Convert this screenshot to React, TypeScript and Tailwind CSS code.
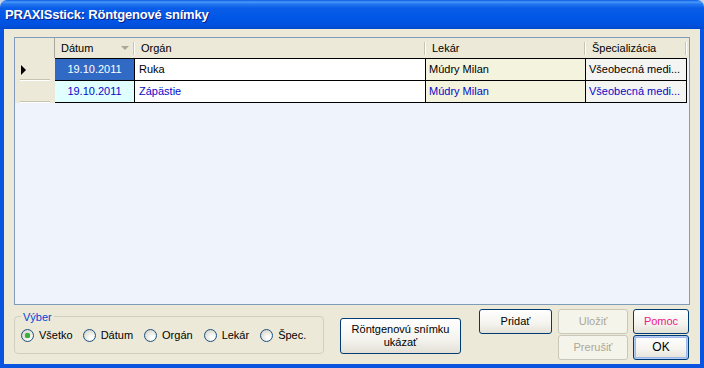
import React from 'react';

interface Column {
    label: string;
    width: number;
    sorted?: boolean;
}

interface Row {
    date: string;
    organ: string;
    doctor: string;
    spec: string;
    current?: boolean;
}

const columns: Column[] = [
    { label: 'Dátum', width: 80, sorted: true },
    { label: 'Orgán', width: 291 },
    { label: 'Lekár', width: 160 },
    { label: 'Špecializácia', width: 101 },
];

const rows: Row[] = [
    { date: '19.10.2011', organ: 'Ruka', doctor: 'Múdry Milan', spec: 'Všeobecná medi...', current: true },
    { date: '19.10.2011', organ: 'Zápästie', doctor: 'Múdry Milan', spec: 'Všeobecná medi...' },
];

const filters = ['Všetko', 'Dátum', 'Orgán', 'Lekár', 'Špec.'];

// XP style push button
const XpButton: React.FC<{
    children: React.ReactNode;
    className?: string;
    disabled?: boolean;
    isDefault?: boolean;
    textClass?: string;
}> = ({ children, className = '', disabled, isDefault, textClass = 'text-black' }) => (
    <div
        className={`flex items-center justify-center rounded-[3px] border text-center leading-[13px] ${
            disabled
                ? 'border-[#C9C7BA] bg-[#F5F4EA] text-[#ACA899]'
                : `border-[#003C74] bg-[linear-gradient(to_bottom,#FFFFFF,#F4F3EE_60%,#E3E1D6)] ${textClass}`
        } ${isDefault ? 'shadow-[inset_0_0_0_1px_#B4CCF4,inset_0_0_0_2px_#9EB8EA]' : ''} ${className}`}
    >
        {children}
    </div>
);

const Radio: React.FC<{ label: string; checked?: boolean; className?: string }> = ({ label, checked, className = '' }) => (
    <div className={`flex items-center gap-[5px] ${className}`}>
        <div className="flex h-[13px] w-[13px] items-center justify-center rounded-full border border-[#1C5180] bg-[radial-gradient(circle_at_65%_70%,#FFFFFF_10%,#E6E6DF_55%,#C8C7BD_100%)]">
            {checked && <div className="h-[5px] w-[5px] rounded-full bg-[#3BAE3B] shadow-[0_0_1px_#1E8E1E]" />}
        </div>
        <span>{label}</span>
    </div>
);

const HeaderSep = () => (
    <div className="absolute right-0 top-[4px] flex h-[13px]">
        <div className="w-px bg-[#C7C5B2]" />
        <div className="w-px bg-white" />
    </div>
);

export default function App() {
    return (
        <div className="h-[368px] w-[704px] bg-[#C9D3E3] font-['Liberation_Sans',Arial,sans-serif] text-[11px] text-black">
            <div className="flex h-full flex-col">
                {/* Title bar */}
                <div className="flex h-[29px] items-center rounded-t-[7px] bg-[linear-gradient(to_bottom,#0A5CE6_0px,#4A98F8_2px,#2578F0_4px,#0A5DE8_8px,#0056E6_18px,#0052DE_25px,#0049CC_29px)] pl-[5px]">
                    <span className="text-[13px] font-bold tracking-[-0.2px] text-white [text-shadow:1px_1px_0_#0A1E8A]">
                        PRAXISstick: Röntgenové snímky
                    </span>
                </div>

                {/* Client area */}
                <div className="flex flex-1 flex-col border-x-4 border-b-4 border-[#0A55E0] bg-[#ECE9D8] px-[10px] pt-[8px]">
                    {/* Grid */}
                    <div className="h-[268px] border border-[#7F9DB9] bg-[#EEF3FC]">
                        <div className="flex h-[20px] bg-[#ECE9D8]">
                            <div className="w-[40px] border-r border-[#ACA899]" />
                            {columns.map((c) => (
                                <div key={c.label} className="relative flex items-center pl-[6px]" style={{ width: c.width }}>
                                    <span>{c.label}</span>
                                    {c.sorted && (
                                        <div className="absolute right-[6px] top-[8px] h-0 w-0 border-x-[4px] border-t-[4px] border-x-transparent border-t-[#ACA899]" />
                                    )}
                                    <HeaderSep />
                                </div>
                            ))}
                        </div>
                        {rows.map((r, i) => {
                            const blue = !r.current;
                            const textCls = blue ? 'text-[#0808C8]' : 'text-black';
                            const top = i === 0 ? 'border-t' : '';
                            return (
                                <div key={i} className="flex">
                                    <div className={`relative w-[40px] bg-[#ECE9D8] ${i === 0 ? 'h-[23px]' : 'h-[22px]'}`}>
                                        {r.current && (
                                            <div className="absolute left-[6px] top-[7px] h-0 w-0 border-y-[5px] border-l-[5px] border-y-transparent border-l-black" />
                                        )}
                                        <div className="absolute bottom-[1px] left-[5px] right-[5px] h-px bg-[#C7C5B2]" />
                                        <div className="absolute bottom-0 left-[5px] right-[5px] h-px bg-white" />
                                    </div>
                                    <div
                                        className={`flex w-[80px] items-center justify-center border-b border-r border-black ${top} ${
                                            r.current ? 'bg-[#316AC5] text-white' : 'bg-[#E0FFFF] text-[#0808C8]'
                                        }`}
                                    >
                                        {r.date}
                                    </div>
                                    <div className={`flex w-[291px] items-center border-b border-r border-black bg-white pl-[4px] ${top} ${textCls}`}>
                                        {r.organ}
                                    </div>
                                    <div className={`flex w-[160px] items-center border-b border-r border-black bg-[#F3F3DE] pl-[3px] ${top} ${textCls}`}>
                                        {r.doctor}
                                    </div>
                                    <div className={`flex w-[101px] items-center border-b border-r border-black bg-[#F4F4F2] pl-[3px] ${top} ${textCls}`}>
                                        {r.spec}
                                    </div>
                                </div>
                            );
                        })}
                    </div>

                    {/* Bottom controls */}
                    <div className="mt-[4px] flex items-start">
                        <div className="relative mt-[7px] flex h-[38px] w-[310px] items-center rounded-[4px] border border-[#D0D0BF] pl-[6px]">
                            <span className="absolute -top-[8px] left-[6px] bg-[#ECE9D8] px-[2px] text-[#0046D5]">Výber</span>
                            {filters.map((f, i) => (
                                <Radio key={f} label={f} checked={i === 0} className={i === 0 ? 'mr-[10px]' : 'mr-[11px]'} />
                            ))}
                        </div>
                        <XpButton className="ml-[16px] mt-[9px] h-[36px] w-[121px] flex-col">
                            <span>Röntgenovú snímku</span>
                            <span>ukázať</span>
                        </XpButton>
                        <XpButton className="ml-[18px] h-[25px] w-[73px]">Pridať</XpButton>
                        <div className="ml-[6px] flex flex-col gap-[1px]">
                            <XpButton disabled className="h-[25px] w-[70px]">Uložiť</XpButton>
                            <XpButton disabled className="h-[25px] w-[70px]">Prerušiť</XpButton>
                        </div>
                        <div className="ml-[5px] flex flex-col gap-[1px]">
                            <XpButton className="h-[25px] w-[56px]" textClass="text-[#F0188C]">Pomoc</XpButton>
                            <XpButton isDefault className="h-[25px] w-[56px] text-[12px]">OK</XpButton>
                        </div>
                    </div>
                </div>
            </div>
        </div>
    );
}
